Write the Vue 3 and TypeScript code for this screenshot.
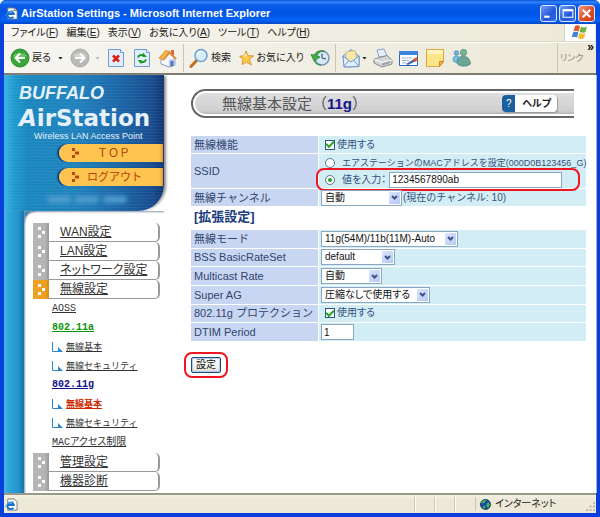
<script setup lang="ts">
import { ref } from 'vue'

interface MenuItem { label: string; key: string }
interface NavItem { label: string; kind: 'main' | 'sub' | 'leaf'; tone?: 'active' | 'green' | 'navy' | 'red' | 'last' }
interface Field { id: string; label: string; type: 'select' | 'check' | 'text'; value?: string; size?: string }

const menus: MenuItem[] = [
  { label: 'ファイル', key: 'F' },
  { label: '編集', key: 'E' },
  { label: '表示', key: 'V' },
  { label: 'お気に入り', key: 'A' },
  { label: 'ツール', key: 'T' },
  { label: 'ヘルプ', key: 'H' },
]

const nav: NavItem[] = [
  { label: 'WAN設定', kind: 'main' },
  { label: 'LAN設定', kind: 'main' },
  { label: 'ネットワーク設定', kind: 'main' },
  { label: '無線設定', kind: 'main', tone: 'active' },
  { label: 'AOSS', kind: 'sub' },
  { label: '802.11a', kind: 'sub', tone: 'green' },
  { label: '無線基本', kind: 'leaf' },
  { label: '無線セキュリティ', kind: 'leaf' },
  { label: '802.11g', kind: 'sub', tone: 'navy' },
  { label: '無線基本', kind: 'leaf', tone: 'red' },
  { label: '無線セキュリティ', kind: 'leaf' },
  { label: 'MACアクセス制限', kind: 'sub', tone: 'last' },
  { label: '管理設定', kind: 'main' },
  { label: '機器診断', kind: 'main' },
]

const fields: Field[] = [
  { id: 'mode', label: '無線モード', type: 'select', value: '11g(54M)/11b(11M)-Auto', size: 'w-xl' },
  { id: 'rateset', label: 'BSS BasicRateSet', type: 'select', value: 'default', size: 'w-m' },
  { id: 'multicast', label: 'Multicast Rate', type: 'select', value: '自動', size: 'w-s' },
  { id: 'superag', label: 'Super AG', type: 'select', value: '圧縮なしで使用する', size: 'w-l' },
  { id: 'protection', label: '802.11g プロテクション', type: 'check' },
  { id: 'dtim', label: 'DTIM Period', type: 'text' },
]

const ssidMode = ref<'mac' | 'value'>('value')
const ssid = ref('1234567890ab')
const dtim = ref('1')
const wireless = ref(true)
const protection = ref(true)
</script>

<template>
  <div class="window">
    <header class="titlebar">
      <svg class="ie" viewBox="0 0 14 14" aria-hidden="true">
        <path d="M3 1h7l3 3v9H3z" fill="#fff" stroke="#777" />
        <path d="M10 1v3h3" fill="#d9d9d9" stroke="#777" />
        <path d="M9 10.500A3.500 3.500 0 1 1 9.500 7.500H3" fill="none" stroke="#1670d2" stroke-width="2" />
        <path d="M.5 10C1 7 5 4 9.500 4" fill="none" stroke="#4aa5ee" />
      </svg>
      <h1>AirStation Settings - Microsoft Internet Explorer</h1>
      <button type="button" class="cap" aria-label="最小化"><svg viewBox="0 0 14 14"><path d="M3 10h5" stroke="#fff" stroke-width="2" /></svg></button>
      <button type="button" class="cap" aria-label="最大化"><svg viewBox="0 0 14 14"><path d="M3 4h9M3 3.500h9v7H3z" fill="none" stroke="#fff" /><path d="M3 4h9" stroke="#fff" stroke-width="2" /></svg></button>
      <button type="button" class="cap close" aria-label="閉じる"><svg viewBox="0 0 14 14"><path d="M3.500 3.500l7 7M10.500 3.500l-7 7" stroke="#fff" stroke-width="2" /></svg></button>
    </header>

    <div class="menubar">
      <nav class="menus">
        <button v-for="m in menus" :key="m.key" type="button">{{ m.label }}(<u>{{ m.key }}</u>)</button>
      </nav>
      <div class="flag">
        <svg viewBox="0 0 18 16" aria-hidden="true">
          <path d="M4 2q3-1.500 5 .3L7.700 7.500Q5.500 6 2.500 7.300z" fill="#e8572a" />
          <path d="M10 2.800q3 1.500 6-.2L14.500 8q-3 1.500-6-.2z" fill="#6cb33f" />
          <path d="M2.200 8.300q3-1.200 5.200.3L6 13.500Q4 12.200.8 13.300z" fill="#3c7fd6" />
          <path d="M8.300 9q3 1.500 6 0L13 14.300q-3 1.300-6-.3z" fill="#f5bd2c" />
        </svg>
      </div>
    </div>

    <div class="toolbar">
      <button type="button" class="tool">
        <svg class="ico" viewBox="0 0 20 20" aria-hidden="true">
          <circle cx="10" cy="10" r="9" fill="#3aa63a" stroke="#2b8a2f" />
          <path d="M3 8a8 6 0 0 1 14 0q-7 3-14 0" fill="#8ed67e" opacity=".6" />
          <path d="M15 10H6M10 5.500L5.500 10l4.500 4.500" fill="none" stroke="#fff" stroke-width="2" />
        </svg>
        <span>戻る</span><i class="caret"></i>
      </button>
      <button type="button" class="tool fwd" aria-label="進む">
        <svg class="ico" viewBox="0 0 20 20" aria-hidden="true">
          <circle cx="10" cy="10" r="9" fill="#b9b9b5" stroke="#a9a9a5" />
          <path d="M3 8a8 6 0 0 1 14 0q-7 3-14 0" fill="#e4e4e0" opacity=".6" />
          <path d="M5 10h9M10 5.500l4.500 4.500-4.500 4.500" fill="none" stroke="#fff" stroke-width="2" />
        </svg>
        <i class="caret dim"></i>
      </button>
      <button type="button" class="tool" aria-label="中止">
        <svg class="ico" viewBox="0 0 20 20" aria-hidden="true">
          <path d="M2.500 1.500h12l3 3v14h-15z" fill="#e3eefc" stroke="#6b9bd8" /><path d="M14.500 1.500v3h3" fill="#fff" stroke="#6b9bd8" />
          <path d="M7 7.500l6 6M13 7.500l-6 6" stroke="#d8200e" stroke-width="2.500" />
        </svg>
      </button>
      <button type="button" class="tool" aria-label="更新">
        <svg class="ico" viewBox="0 0 20 20" aria-hidden="true">
          <path d="M2.500 1.500h12l3 3v14h-15z" fill="#e3eefc" stroke="#6b9bd8" /><path d="M14.500 1.500v3h3" fill="#fff" stroke="#6b9bd8" />
          <path d="M6 9.500Q7 6 12 7.500M14 11.500q-1 3.500-6 2" fill="none" stroke="#1f9a28" stroke-width="2" />
          <path d="M11 4.500l4 4.500h-4.500zM9.500 16.500l-4-4.500h4z" fill="#1f9a28" />
        </svg>
      </button>
      <button type="button" class="tool" aria-label="ホーム">
        <svg class="ico" viewBox="0 0 20 20" aria-hidden="true">
          <path d="M3 10l8-5 6 6v6l-6 2-8-3z" fill="#f4f7ff" stroke="#8d9cc4" />
          <path d="M11 12l6-2v7l-6 2z" fill="#b8c8ee" />
          <path d="M13 2h3v6l-3-2z" fill="#d76a44" />
          <path d="M1 10L7.500 2.500l4.500 1L5.500 12z" fill="#f6b548" stroke="#c47a1a" stroke-width=".6" />
          <path d="M11 3l8 7.500-2 .8L11.500 6 6 12.500l-1-.7z" fill="#e88a2c" />
          <path d="M12.500 13h3v5l-3 1z" fill="#5975bb" />
        </svg>
      </button>
      <i class="rule"></i>
      <button type="button" class="tool search">
        <svg class="ico" viewBox="0 0 20 20" aria-hidden="true">
          <path d="M8 12l-6 6.500" stroke="#c46d20" stroke-width="3" stroke-linecap="round" />
          <circle cx="12" cy="7.500" r="6" fill="#d6edfc" stroke="#6c9fd4" stroke-width="1.500" />
          <path d="M8.500 7a4 4 0 0 1 4-3.500" stroke="#fff" stroke-width="1.500" fill="none" />
        </svg>
        <span>検索</span>
      </button>
      <button type="button" class="tool favs">
        <svg class="ico" viewBox="0 0 20 20" aria-hidden="true">
          <path d="M9 1l2.700 6 7.300.3-5.500 4.500L16 19l-6.300-3.500L4 18.500l1-6.500L.8 7.800l6-.8z" fill="#fbc64a" stroke="#cd8a1e" />
          <path d="M9 3.500l1.500 4.300-5 .7z" fill="#fff0a8" />
        </svg>
        <span>お気に入り</span>
      </button>
      <button type="button" class="tool" aria-label="履歴">
        <svg class="ico" viewBox="0 0 20 20" aria-hidden="true">
          <circle cx="12" cy="10" r="7" fill="#d3e9f8" stroke="#8197ad" stroke-width="1.500" />
          <path d="M12 5.500V10l4 1" stroke="#345" fill="none" />
          <path d="M15 3.500A8.500 8.500 0 0 0 4 7L1 6.500 4 13l6-4-3-1a6 6 0 0 1 8-4.500M4 13q2 4 7 4.500" fill="#3fae45" stroke="#227d2b" stroke-width=".7" />
        </svg>
      </button>
      <i class="rule"></i>
      <button type="button" class="tool mail" aria-label="メール">
        <svg class="ico" viewBox="0 0 20 20" aria-hidden="true">
          <path d="M2 8l8-6.500L18 8v10.500l-14 .5z" fill="#c6dcf6" stroke="#6b98d0" />
          <path d="M5 4l9-1.500 2 8-6 3.500-5-3z" fill="#fde8a8" stroke="#c9a75b" stroke-width=".6" />
          <path d="M2 8l8 6 8-6v10.500L3 19z" fill="#e2f0fe" stroke="#6b98d0" /><path d="M3 18.500l5-6M17.500 18l-5-6" stroke="#6b98d0" />
        </svg>
        <i class="caret"></i>
      </button>
      <button type="button" class="tool" aria-label="印刷">
        <svg class="ico" viewBox="0 0 20 20" aria-hidden="true">
          <path d="M6 9L4 2l7-1 3 7z" fill="#e3edfb" stroke="#8aa2cc" />
          <path d="M1 11l13-3.500L19 12v4l-10 3-8-4z" fill="#d6d6d8" stroke="#8a8a90" />
          <path d="M1 11l8 3.500 10-2.500" fill="none" stroke="#fff" /><path d="M9 15.500l8-2.500v2l-8 2.500z" fill="#9b9ba5" />
        </svg>
      </button>
      <button type="button" class="tool" aria-label="編集">
        <svg class="ico" viewBox="0 0 20 20" aria-hidden="true">
          <path d="M.5 3.500h18v14H.5z" fill="#fff" stroke="#2b67b8" /><path d="M0 3h19v4H0z" fill="#3c83dc" />
          <path d="M3 10h10M3 12.500h7M3 15h4" stroke="#9bb4d8" /><path d="M7 16l8-5 2 2-8 4z" fill="#3a68b4" /><path d="M14 11l4-2 1 3-3 2z" fill="#e0592a" />
        </svg>
      </button>
      <button type="button" class="tool" aria-label="メモ">
        <svg class="ico" viewBox="0 0 20 20" aria-hidden="true">
          <path d="M1.500 1.500h17v12l-4 5h-13z" fill="#ffe58a" stroke="#dba63a" /><path d="M2 2h16v4H2z" fill="#fff3bd" /><path d="M18.500 13.500h-4v5z" fill="#f3b840" stroke="#c98a20" />
        </svg>
      </button>
      <button type="button" class="tool" aria-label="Messenger">
        <svg class="ico" viewBox="0 0 20 20" aria-hidden="true">
          <circle cx="5.500" cy="5" r="2.300" fill="#68b4e0" stroke="#3c7da8" stroke-width=".6" /><path d="M2 13q0-6 4-5 3 0 3 5l-3 2z" fill="#7cc0e8" stroke="#3c7da8" stroke-width=".6" />
          <circle cx="12.500" cy="4.500" r="3.200" fill="#79b58f" stroke="#477c6a" stroke-width=".6" /><path d="M6 15q0-7 7-7 6 1 6.500 8-3 3-9 2-4-1-4.500-3z" fill="#6ba796" stroke="#477c6a" stroke-width=".6" />
        </svg>
      </button>
      <div class="links"><span>リンク</span><b>»</b></div>
    </div>

    <div class="page">
      <aside class="side">
        <div class="brand">
          <strong class="maker">BUFFALO</strong>
          <strong class="product"><em>A</em>irStation</strong>
          <span class="tag">Wireless LAN Access Point</span>
          <a v-for="t in ['ＴＯＰ', 'ログアウト']" :key="t" class="pill" href="#">
            <svg viewBox="0 0 8 10" aria-hidden="true"><path d="M1 0h3v3H1zM4 3.500h4v3H4zM1 7h3v3H1z" fill="#b84a10" /></svg>
            <span>{{ t }}</span>
          </a>
          <div class="smudge"><i></i><i></i><i></i></div>
        </div>
        <ul class="tree">
          <li v-for="(n, i) in nav" :key="i" :class="[n.kind, n.tone]">
            <svg v-if="n.kind === 'main'" class="dots" viewBox="0 0 16 19" aria-hidden="true"><path d="M5 4h3v3H5zM9 8h3v3H9zM5 12h3v3H5z" fill="#fff" /></svg>
            <svg v-else-if="n.kind === 'leaf'" class="elbow" viewBox="0 0 11 10" aria-hidden="true"><path d="M.5 0v9.500H10" fill="none" stroke="#2a85cc" /><path d="M6 5l5 5H6z" fill="#2a85cc" /></svg>
            <a href="#">{{ n.label }}</a>
          </li>
        </ul>
      </aside>

      <main class="content">
        <div class="banner">
          <div class="bar">
            <h2>無線基本設定（<b>11g</b>）</h2>
            <button type="button" class="help"><i>?</i><span>ヘルプ</span></button>
          </div>
        </div>

        <form @submit.prevent>
          <table class="grid">
            <tbody>
              <tr>
                <th scope="row">無線機能</th>
                <td><label class="line"><input v-model="wireless" type="checkbox" />使用する</label></td>
              </tr>
              <tr>
                <th scope="row">SSID</th>
                <td>
                  <label class="line opt long"><input v-model="ssidMode" type="radio" name="ssid" value="mac" />エアステーションのMACアドレスを設定(000D0B123456_G)</label>
                  <div class="line opt pick">
                    <input id="ssid-value" v-model="ssidMode" type="radio" name="ssid" value="value" />
                    <label for="ssid-value">値を入力：</label>
                    <input v-model="ssid" class="box ssid" type="text" aria-label="SSID" />
                    <i class="ring wide"></i>
                  </div>
                </td>
              </tr>
              <tr>
                <th scope="row"><label for="channel">無線チャンネル</label></th>
                <td>
                  <div class="line chan">
                    <span class="drop w-c"><select id="channel"><option>自動</option></select><i class="arrow"><svg viewBox="0 0 7 5"><path d="M1 1l2.500 2.500L6 1" /></svg></i></span>
                    <span>(現在のチャンネル: 10)</span>
                  </div>
                </td>
              </tr>
            </tbody>
          </table>

          <h3>[拡張設定]</h3>

          <table class="grid ext">
            <tbody>
              <tr v-for="f in fields" :key="f.id">
                <th scope="row"><label :for="f.id">{{ f.label }}</label></th>
                <td>
                  <span v-if="f.type === 'select'" class="drop" :class="f.size"><select :id="f.id"><option>{{ f.value }}</option></select><i class="arrow"><svg viewBox="0 0 7 5"><path d="M1 1l2.500 2.500L6 1" /></svg></i></span>
                  <label v-else-if="f.type === 'check'" class="line"><input :id="f.id" v-model="protection" type="checkbox" />使用する</label>
                  <input v-else :id="f.id" v-model="dtim" class="box dtim" type="text" />
                </td>
              </tr>
            </tbody>
          </table>

          <div class="submit">
            <button type="submit">設定</button>
            <i class="ring"></i>
          </div>
        </form>
      </main>
    </div>

    <footer class="status">
      <svg class="ie" viewBox="0 0 14 14" aria-hidden="true">
        <path d="M3 1h7l3 3v9H3z" fill="#fff" stroke="#777" />
        <path d="M9 10.500A3.500 3.500 0 1 1 9.500 7.500H3" fill="none" stroke="#1670d2" stroke-width="2" />
        <path d="M.5 10C1 7 5 4 9.500 4" fill="none" stroke="#4aa5ee" />
      </svg>
      <div class="cells"><i></i><i></i><i></i></div>
      <div class="zone">
        <svg viewBox="0 0 12 12" aria-hidden="true">
          <circle cx="6" cy="6" r="5.500" fill="#1b44b8" stroke="#122" stroke-width=".8" />
          <path d="M2 2.500Q5 0 7 1L5 4 3 5 1 4zM7 5l3-1.500 1 3-2 3.500-2-2zM3 7l3 1-1 3-2-1z" fill="#3cb04a" />
        </svg>
        <span>インターネット</span>
        <svg class="grip" viewBox="0 0 10 10" aria-hidden="true"><path d="M8 0h2v2H8zM4 4h2v2H4zM8 4h2v2H8zM0 8h2v2H0zM4 8h2v2H4zM8 8h2v2H8z" fill="#b5b19c" /></svg>
      </div>
    </footer>
  </div>
</template>

<style>
body {
  margin: 0;
  background: #fff;
}
</style>

<style scoped>
* {
  box-sizing: border-box;
}

.window {
  display: flex;
  flex-direction: column;
  min-height: 100vh;
  border: solid #0a3fdc;
  border-width: 0 4px 4px;
  border-radius: 6px 6px 0 0;
  background: #0a3fdc;
  font-family: "Liberation Sans", "Noto Sans CJK JP", sans-serif;
  font-size: 10px;
  line-height: 14px;
  font-feature-settings: "palt";
  color: #222;
}

button,
input,
select {
  margin: 0;
  font: inherit;
  font-feature-settings: inherit;
  color: inherit;
}

button {
  padding: 0;
  border: 0;
  background: none;
  white-space: nowrap;
}

.titlebar {
  display: flex;
  align-items: center;
  gap: 2px;
  height: 24px;
  margin: 0 -4px;
  padding: 2px 5px 0 5px;
  border-radius: 6px 6px 0 0;
  background: linear-gradient(#0b4fd0, #2f86fb 2px, #0a5be8 5px, #0055e5 14px, #0463fa 20px, #0348c4);
}

.ie {
  width: 13px;
  height: 13px;
}

h1 {
  flex: 1;
  margin: 0 0 0 1px;
  font-size: 11px;
  line-height: 16px;
  color: #fff;
  white-space: nowrap;
}

.cap {
  display: flex;
  width: 17px;
  height: 17px;
  border: 1px solid #dfe8fb;
  border-radius: 3px;
  background: linear-gradient(135deg, #6f9cf5, #2358d8 60%, #2f6cf0);
}

.cap.close {
  background: linear-gradient(135deg, #f09a80, #dc4a24 60%, #c83c18);
}

.menubar {
  display: flex;
  height: 18px;
  background: linear-gradient(90deg, #f6f5f0, #ece9d8);
  border-bottom: 1px solid #dcd8c6;
}

.menus {
  display: flex;
  flex: 1;
  align-items: center;
  gap: 8px;
  padding-left: 7px;
}

.flag {
  display: flex;
  justify-content: center;
  width: 31px;
  margin-right: 1px;
  border-left: 1px solid #d5d1bf;
  background: #fff;
}

.flag svg {
  width: 18px;
  height: 16px;
}

.toolbar {
  display: flex;
  align-items: center;
  gap: 6px;
  height: 33px;
  padding-left: 6px;
  border-top: 1px solid #fff;
  border-bottom: 2px solid #7f7d72;
  background: linear-gradient(90deg, #f6f5f0, #ece9d8);
}

.tool {
  display: flex;
  align-items: center;
  gap: 2px;
  flex: none;
}

.ico {
  width: 20px;
  height: 20px;
}

.caret {
  width: 5px;
  height: 3px;
  margin-left: 5px;
  background: #222;
  clip-path: polygon(0 0, 100% 0, 50% 100%);
}

.caret.dim {
  margin-left: 3px;
  background: #b9b6a8;
}

.mail .caret {
  margin-left: -1px;
}

.fwd {
  margin-left: 1px;
}

.search {
  width: 44px;
}

.favs {
  width: 65px;
}

.rule {
  flex: none;
  width: 1px;
  height: 28px;
  margin: 0 -1px;
  background: #cbc7b4;
}

.links {
  display: flex;
  justify-content: space-between;
  align-self: stretch;
  width: 39px;
  margin-left: auto;
  padding: 0 2px;
  border-left: 1px solid #cbc7b4;
  color: #8b897f;
  font-size: 9px;
  white-space: nowrap;
}

.links span {
  align-self: center;
}

.links b {
  color: #111;
  font-size: 12px;
  line-height: 9px;
}

.page {
  display: flex;
  flex: 1;
  margin-right: -1px;
  border-right: 1px solid #aab4c8;
  background: #fff;
}

.side {
  display: flex;
  flex-direction: column;
  flex: none;
  width: 160px;
  background: linear-gradient(90deg, #45b8e6, #2ba5da 5px, #2496cc 14px, #1872ad 20px, #fff 20px);
}

.brand {
  display: flex;
  flex-direction: column;
  height: 136px;
  padding: 6px 0 0 15px;
  border-radius: 0 0 26px 0;
  background:
    repeating-linear-gradient(rgb(255 255 255 / 5%) 0 1px, transparent 1px 3px),
    linear-gradient(90deg, #3bb2e2, #1f9ad0 10px, #1a87be 24px, #2183bd 70px, #1d6aab 110px, #184d8f 148px, #123672);
  box-shadow: 3px 0 3px -1px #888;
  color: #e4f1fb;
}

.maker {
  font: italic bold 18px/24px "Liberation Sans", sans-serif;
}

.product {
  margin-top: 1px;
  font: bold 23px/24px "DejaVu Sans", sans-serif;
}

.tag {
  padding-left: 15px;
  font-size: 9px;
  line-height: 12px;
  white-space: nowrap;
}

.pill {
  display: flex;
  align-items: center;
  gap: 18px;
  flex: none;
  height: 18px;
  margin: 2px 1px 4px 40px;
  padding-left: 12px;
  border-radius: 9px 0 0 9px;
  background: linear-gradient(90deg, #fdc550 100px, #e89a35);
  box-shadow: -2px 0 1px #123f78;
  font-size: 11px;
  font-feature-settings: normal;
  color: #b23c08;
  text-decoration: none;
}

.pill + .pill {
  gap: 8px;
}

.pill svg {
  width: 8px;
  height: 10px;
}

.smudge {
  display: flex;
  gap: 4px;
  padding: 6px 0 0 28px;
  filter: blur(2px);
}

.smudge i {
  width: 24px;
  height: 7px;
  border-radius: 4px;
  background: #4f9bce;
}

.tree {
  flex: 1;
  margin: 0 0 0 20px;
  padding: 12px 4px 0 9px;
  list-style: none;
  background: radial-gradient(circle at 12px 12px, #fff 10px, #8fa9bd 12px, #1a7ab4 13px) no-repeat 0 0 / 12px 12px, #fff;
  box-shadow: inset 2px 2px 2px -1px #8b99a6;
}

.tree li {
  display: flex;
  align-items: center;
  height: 19px;
}

.tree a {
  color: #333;
  white-space: nowrap;
}

.tree .main {
  gap: 11px;
  border: solid #9a9a9a;
  border-width: 0 2px 1px 0;
  border-radius: 0 5px 5px 0;
  font-size: 12px;
}

.tree .dots {
  width: 16px;
  height: 19px;
  background: linear-gradient(90deg, #b5b5b5 12px, #989898);
}

.tree .active .dots {
  background: linear-gradient(90deg, #eea020 12px, #d88a14);
}

.tree .sub {
  padding-left: 19px;
  font-family: "Liberation Mono", "Noto Sans CJK JP", monospace;
}

.tree .leaf {
  gap: 3px;
  padding-left: 19px;
  font-size: 9px;
  font-feature-settings: normal;
}

.elbow {
  width: 11px;
  height: 10px;
}

.tree .last {
  height: 21px;
}

.tree .green a,
.tree .navy a,
.tree .red a {
  font-weight: bold;
}

.tree .green a {
  color: #0a960a;
}

.tree .navy a {
  color: #10108c;
}

.tree .red a {
  color: #cc2a00;
}

.content {
  flex: 1;
  min-width: 0;
  padding: 14px 9px 8px 26px;
}

.banner {
  margin: 0 13px 17px 1px;
  padding: 2px 0 2px 2px;
  border: solid #666;
  border-width: 2px 0 2px 2px;
  border-radius: 15px 0 0 15px;
}

.bar {
  display: flex;
  align-items: center;
  justify-content: space-between;
  height: 21px;
  padding: 0 17px 0 27px;
  border-radius: 11px 0 0 11px;
  background: linear-gradient(#dedede, #d0d0d0 18px, #b4b4b4);
}

h2 {
  margin: 0;
  font-size: 15px;
  line-height: 20px;
  font-weight: normal;
  font-feature-settings: normal;
  color: #555;
  white-space: nowrap;
}

h2 b {
  color: #15158c;
}

.help {
  display: flex;
  height: 17px;
  border-radius: 4px;
  background: #fff;
  box-shadow: 1px 1px 1px #999;
  color: #222;
}

.help i {
  width: 13px;
  border-radius: 4px 0 0 4px;
  background: #1a5f9e;
  font-style: normal;
  line-height: 17px;
  color: #fff;
}

.help span {
  padding: 0 6px 0 7px;
  font-weight: bold;
  line-height: 17px;
}

.grid {
  width: 100%;
  border-spacing: 1px;
  table-layout: fixed;
  color: #33517f;
}

.grid.ext {
  height: 113px;
}

.grid th,
.grid td {
  height: 17px;
  padding: 0 0 0 2px;
  background: #d2edf4;
  text-align: left;
  vertical-align: middle;
}

.grid th {
  width: 127px;
  padding-left: 3px;
  background: #c8d6f2;
  font-size: 11px;
  font-weight: normal;
  font-feature-settings: normal;
  color: #2f456e;
  white-space: nowrap;
}

.line {
  display: flex;
  align-items: center;
  gap: 2px;
  padding-left: 4px;
  white-space: nowrap;
}

.opt {
  position: relative;
  gap: 7px;
  height: 17px;
}

.long {
  font-size: 9px;
  font-feature-settings: normal;
}

.pick {
  gap: 0;
}

.pick label {
  padding: 0 3px 0 7px;
}

.chan {
  gap: 1px;
  padding-left: 0;
  font-feature-settings: normal;
}

input[type="checkbox"],
input[type="radio"] {
  appearance: none;
  flex: none;
  display: grid;
  place-items: center;
  width: 10px;
  height: 10px;
  border: 1px solid #2c5578;
  background: #fff;
}

input[type="radio"] {
  border-color: #5b7a92;
  border-radius: 50%;
}

input[type="checkbox"]:checked::before {
  content: "";
  width: 6px;
  height: 3px;
  margin-top: -2px;
  border: solid #21a121;
  border-width: 0 0 2px 2px;
  transform: rotate(-45deg);
}

input[type="radio"]:checked::before {
  content: "";
  width: 4px;
  height: 4px;
  border-radius: 50%;
  background: #21a121;
}

.box {
  height: 16px;
  padding: 0 2px;
  border: 1px solid #8aa6c0;
  background: #fff;
  color: #111;
}

.ssid {
  width: 173px;
}

.dtim {
  display: block;
  width: 33px;
}

.drop {
  position: relative;
  display: flex;
  height: 16px;
  border: 1px solid #8aa6c0;
  background: #fff;
  color: #111;
}

.drop select {
  appearance: none;
  width: 100%;
  padding: 0 14px 0 3px;
  border: 0;
  background: none;
  line-height: 14px;
}

.arrow {
  position: absolute;
  top: 1px;
  right: 1px;
  bottom: 1px;
  display: grid;
  place-items: center;
  width: 11px;
  background: linear-gradient(135deg, #dbe6fe, #b4c8f6);
  pointer-events: none;
}

.arrow svg {
  width: 7px;
  height: 5px;
  fill: none;
  stroke: #3d5280;
  stroke-width: 2;
}

.w-c { width: 81px; }
.w-s { width: 61px; }
.w-m { width: 74px; }
.w-l { width: 109px; }
.w-xl { width: 137px; }

h3 {
  margin: 1px 0 4px 4px;
  font-size: 13px;
  line-height: 17px;
  font-feature-settings: normal;
  color: #1c3c80;
}

.ring {
  position: absolute;
  inset: -5px -7px;
  border: 2px solid #ee1620;
  border-radius: 8px;
  pointer-events: none;
}

.ring.wide {
  inset: -3px 6px -3px -5px;
}

.submit {
  position: relative;
  width: max-content;
  margin: 15px 0 0 1px;
}

.submit button {
  display: block;
  height: 16px;
  padding: 0 4px;
  border: 1px solid #1e4a7c;
  border-radius: 2px;
  background: linear-gradient(#fff, #ecebe5 80%, #d6d0c5);
  box-shadow: inset 0 0 0 1px #b5cbee;
  color: #111;
}

.status {
  display: flex;
  align-items: center;
  height: 20px;
  padding-left: 1px;
  border-top: 2px solid #9a9889;
  background: linear-gradient(#f3f1e6, #ece9d8 5px);
}

.cells {
  display: flex;
  gap: 18px;
  flex: 1;
  justify-content: flex-end;
  padding-right: 19px;
}

.cells i {
  width: 2px;
  height: 14px;
  border-left: 1px solid #c9c5b2;
  background: #fff;
}

.zone {
  display: flex;
  align-items: center;
  gap: 4px;
  width: 121px;
  padding-left: 4px;
  border-left: 1px solid #c9c5b2;
}

.zone svg {
  width: 11px;
  height: 11px;
}

.zone .grip {
  align-self: flex-end;
  width: 9px;
  height: 9px;
  margin: 0 1px 0 auto;
}
</style>
